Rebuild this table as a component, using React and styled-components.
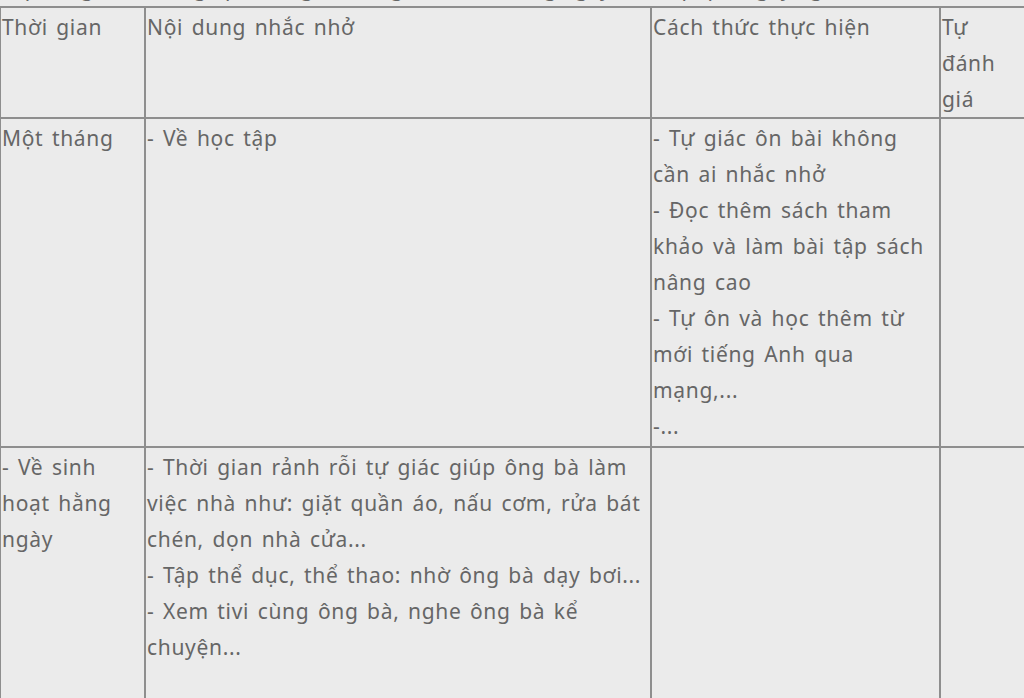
import React from "react";
import styled, { createGlobalStyle } from "styled-components";

const Global = createGlobalStyle`
  html, body { margin: 0; padding: 0; background: #ebebeb; }
  body { overflow: hidden; font-family: "Noto Sans", "Open Sans", sans-serif; }
`;

const Page = styled.div`
  width: 1024px;
  height: 698px;
  overflow: hidden;
  background: #ebebeb;
`;

const Intro = styled.p`
  margin: -30px 0 0 2px;
  font-size: 21px;
  line-height: 36px;
  color: #666;
  white-space: nowrap;
`;

const Table = styled.table`
  border-collapse: collapse;
  table-layout: fixed;
  width: 1160px;
  margin-left: -1px;
`;

const Col = styled.col`
  width: ${(p) => p.$w}px;
`;

const Cell = styled.td`
  border: 2px solid #8e8e8e;
  padding: 1px 2px 0 1px;
  vertical-align: top;
  font-size: 21px;
  line-height: 36px;
  letter-spacing: 0.68px;
  word-spacing: 2.4px;
  color: #666;
  height: ${(p) => p.$h}px;
`;

const Line = styled.span`
  display: block;
  white-space: nowrap;
`;

const columns = [145, 506, 289, 220];

const rows = [
  {
    h: 108,
    cells: [
      ["Thời gian"],
      ["Nội dung nhắc nhở"],
      ["Cách thức thực hiện"],
      ["Tự", "đánh", "giá"],
    ],
  },
  {
    h: 326,
    cells: [
      ["Một tháng"],
      ["- Về học tập"],
      [
        "- Tự giác ôn bài không",
        "cần ai nhắc nhở",
        "- Đọc thêm sách tham",
        "khảo và làm bài tập sách",
        "nâng cao",
        "- Tự ôn và học thêm từ",
        "mới tiếng Anh qua",
        "mạng,...",
        "-...",
      ],
      [],
    ],
  },
  {
    h: 300,
    cells: [
      ["- Về sinh", "hoạt hằng", "ngày"],
      [
        "- Thời gian rảnh rỗi tự giác giúp ông bà làm",
        "việc nhà như: giặt quần áo, nấu cơm, rửa bát",
        "chén, dọn nhà cửa...",
        "- Tập thể dục, thể thao: nhờ ông bà dạy bơi...",
        "- Xem tivi cùng ông bà, nghe ông bà kể",
        "chuyện...",
      ],
      [],
      [],
    ],
  },
];

export default function App() {
  return (
    <Page>
      <Global />
      <Intro>
        Lập bảng kế hoạch giúp đỡ ông bà trong sinh hoạt hằng ngày, học tập qua ngày nghỉ
      </Intro>
      <Table>
        <colgroup>
          {columns.map((w, i) => (
            <Col key={i} $w={w} />
          ))}
        </colgroup>
        <tbody>
          {rows.map((r, i) => (
            <tr key={i}>
              {r.cells.map((c, j) => (
                <Cell key={j} $h={r.h}>
                  {c.map((t, k) => (
                    <Line key={k}>{t}</Line>
                  ))}
                </Cell>
              ))}
            </tr>
          ))}
        </tbody>
      </Table>
    </Page>
  );
}
